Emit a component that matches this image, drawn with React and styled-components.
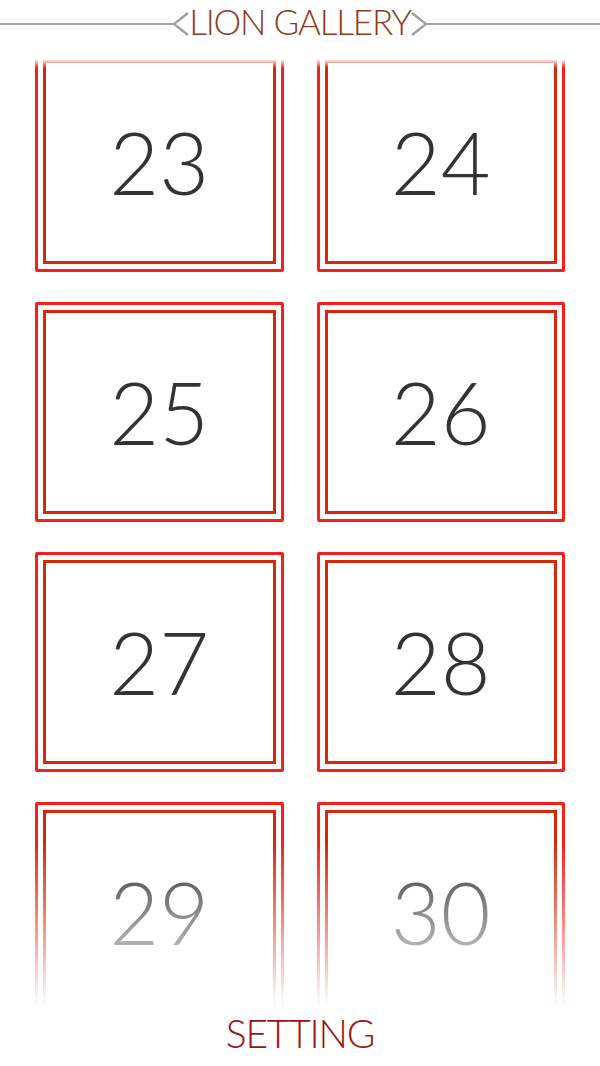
import { useLayoutEffect, useRef } from "react";
import styled, { createGlobalStyle } from "styled-components";

const Global = createGlobalStyle`
  html, body {
    margin: 0;
    padding: 0;
    background: #fff;
  }
  body {
    font-family: Lato, "Open Sans", sans-serif;
  }
`;

const Page = styled.div`
  width: 600px;
  height: 1066px;
  display: flex;
  flex-direction: column;
  background: #fff;
  overflow: hidden;
`;

const Header = styled.div`
  height: 56px;
  flex-shrink: 0;
  display: flex;
  align-items: flex-start;
  padding-top: 12px;
  box-sizing: border-box;
`;

const HeaderRow = styled.div`
  width: 100%;
  height: 24px;
  display: flex;
  align-items: center;
`;

const Rule = styled.div`
  flex: 1;
  height: 2px;
  background: #a0a0a0;
`;

const Title = styled.h1`
  margin: 0;
  font-family: Lato, sans-serif;
  font-weight: 300;
  font-size: 35px;
  line-height: 1;
  letter-spacing: -1.2px;
  color: #8e3a1b;
  white-space: nowrap;
  position: relative;
  top: -3px;
`;

const Chevron = ({ dir }) => (
  <svg width="16" height="24" viewBox="0 0 16 24" style={{ display: "block" }}>
    <path
      d={dir === "left" ? "M15 1 L1 12 L15 23" : "M1 1 L15 12 L1 23"}
      fill="none"
      stroke="#a0a0a0"
      strokeWidth="2.4"
    />
  </svg>
);

const Viewport = styled.div`
  flex: 1;
  overflow: hidden;
  -webkit-mask-image: linear-gradient(
    to bottom,
    transparent 3px,
    #000 12px,
    #000 calc(100% - 165px),
    transparent 100%
  );
  mask-image: linear-gradient(
    to bottom,
    transparent 3px,
    #000 12px,
    #000 calc(100% - 165px),
    transparent 100%
  );
`;

const Grid = styled.div`
  display: grid;
  grid-template-columns: 1fr 1fr;
  column-gap: 33px;
  row-gap: 30px;
  padding: 30px 35px;
`;

const Card = styled.div`
  height: 220px;
  box-sizing: border-box;
  border: 3px solid #f71e1e;
  border-radius: 2px;
  padding: 5px;
  display: flex;
`;

const Inner = styled.div`
  flex: 1;
  border: 3px solid #d8280a;
  display: flex;
  align-items: center;
  justify-content: center;
`;

const Number = styled.span`
  font-family: Lato, sans-serif;
  font-weight: 300;
  font-size: 86px;
  line-height: 1;
  color: #333;
`;

const Footer = styled.div`
  height: 58px;
  flex-shrink: 0;
  display: flex;
  justify-content: center;
  align-items: center;
`;

const Setting = styled.span`
  font-family: Lato, sans-serif;
  font-weight: 300;
  font-size: 39px;
  line-height: 1;
  letter-spacing: -1.2px;
  color: #9a1414;
  position: relative;
  top: -4px;
`;

const levels = Array.from({ length: 30 }, (_, i) => i + 1);

const App = () => {
  const scroller = useRef(null);

  useLayoutEffect(() => {
    // level 23 row sits just under the header
    if (scroller.current) scroller.current.scrollTop = 30 + 11 * 250 + 4;
  }, []);

  return (
    <Page>
      <Global />
      <Header>
        <HeaderRow>
          <Rule />
          <Chevron dir="left" />
          <Title>LION GALLERY</Title>
          <Chevron dir="right" />
          <Rule />
        </HeaderRow>
      </Header>
      <Viewport ref={scroller}>
        <Grid>
          {levels.map((n) => (
            <Card key={n}>
              <Inner>
                <Number>{n}</Number>
              </Inner>
            </Card>
          ))}
        </Grid>
      </Viewport>
      <Footer>
        <Setting>SETTING</Setting>
      </Footer>
    </Page>
  );
};

export default App;
